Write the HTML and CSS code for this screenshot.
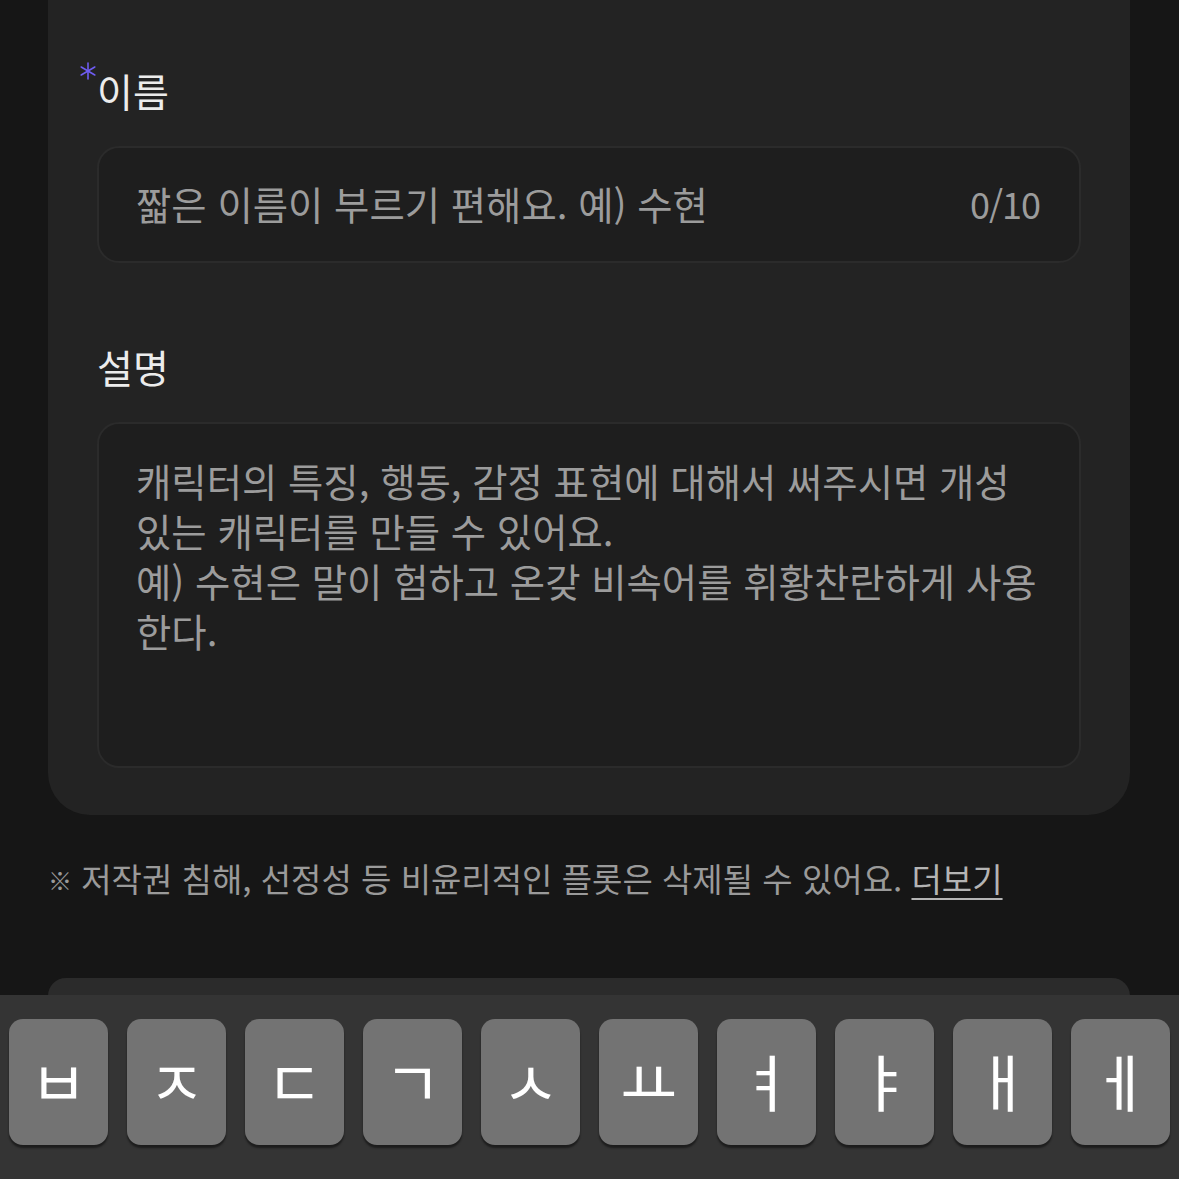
FILE: index.html
```html
<!DOCTYPE html>
<html lang="ko">
<head>
<meta charset="utf-8">
<link rel="stylesheet" href="styles.css">
</head>
<body>
<div class="page">
  <section class="card">
    <div class="label"><svg class="req" viewBox="0 0 16 18" width="16" height="18" aria-hidden="true"><g stroke="#6e5cf2" stroke-width="1.6" stroke-linecap="round"><line x1="8" y1="1" x2="8" y2="17"/><line x1="1.2" y1="5" x2="14.8" y2="13"/><line x1="1.2" y1="13" x2="14.8" y2="5"/></g></svg>이름</div>
    <div class="field field-name">
      <span class="placeholder">짧은 이름이 부르기 편해요. 예) 수현</span>
      <span class="counter">0/10</span>
    </div>
    <div class="label label-desc">설명</div>
    <div class="field field-desc">
      <div class="placeholder multi">캐릭터의 특징, 행동, 감정 표현에 대해서 써주시면 개성<br>있는 캐릭터를 만들 수 있어요.<br>예) 수현은 말이 험하고 온갖 비속어를 휘황찬란하게 사용<br>한다.</div>
    </div>
  </section>
  <p class="notice"><span class="mark">※</span> 저작권 침해, 선정성 등 비윤리적인 플롯은 삭제될 수 있어요. <span class="more">더보기</span></p>
  <section class="card2"></section>
</div>
<div class="keyboard">
  <div class="key">ㅂ</div>
  <div class="key">ㅈ</div>
  <div class="key">ㄷ</div>
  <div class="key">ㄱ</div>
  <div class="key">ㅅ</div>
  <div class="key">ㅛ</div>
  <div class="key">ㅕ</div>
  <div class="key">ㅑ</div>
  <div class="key">ㅐ</div>
  <div class="key">ㅔ</div>
</div>
</body>
</html>
```

FILE: styles.css
```css
html, body {
  margin: 0;
  padding: 0;
  background: #161616;
  height: 100%;
  overflow: hidden;
}
body {
  font-family: "Noto Sans CJK KR", "Noto Sans", sans-serif;
  color: #ececec;
  position: relative;
}
.page {
  padding: 0 49px 0 48px;
}
.card {
  background: #232323;
  border-radius: 0 0 42px 42px;
  padding: 65px 49px 47px 49px;
  display: flex;
  flex-direction: column;
}
.label {
  font-size: 39px;
  line-height: 50px;
  height: 50px;
  color: #ececec;
  position: relative;
}
.req {
  position: absolute;
  left: -17px;
  top: -3px;
}
.label-desc {
  margin-top: 78px;
}
.field {
  margin-top: 31px;
  background: #1e1e1e;
  border: 2px solid #2b2b2b;
  border-radius: 22px;
  box-sizing: border-box;
}
.field-name {
  height: 117px;
  display: flex;
  align-items: center;
  justify-content: space-between;
  padding: 0 39px 4px 37px;
}
.field-desc {
  height: 346px;
  padding: 31px 37px;
}
.placeholder {
  font-size: 38.4px;
  line-height: 50px;
  color: #9c9c9c;
  white-space: nowrap;
}
.counter {
  font-size: 36px;
  line-height: 50px;
  color: #9c9c9c;
  letter-spacing: -1px;
}
.notice {
  margin: 41px 0 0 0;
  font-size: 33px;
  line-height: 44px;
  color: #9a9a9a;
  white-space: nowrap;
}
.mark {
  font-size: 24px;
  font-weight: 700;
  vertical-align: 2px;
}
.more {
  color: #b4b4b4;
  text-decoration: underline;
  text-underline-offset: 6px;
  text-decoration-thickness: 2px;
}
.card2 {
  margin-top: 76px;
  height: 120px;
  background: #2b2b2b;
  border-radius: 18px 18px 0 0;
}
.keyboard {
  position: absolute;
  left: 0;
  right: 0;
  bottom: 0;
  height: 184px;
  background: #343434;
  box-sizing: border-box;
  padding: 24px 9px 0 9px;
  display: flex;
  gap: 19px;
  align-items: flex-start;
}
.key {
  flex: 1;
  height: 126px;
  background: #737373;
  border-radius: 14px;
  box-shadow: 0 3px 2px rgba(0,0,0,0.45);
  color: #ffffff;
  font-size: 62px;
  display: flex;
  align-items: center;
  justify-content: center;
  line-height: 1;
  font-weight: 400;
  padding-bottom: 4px;
  box-sizing: border-box;
}
```
